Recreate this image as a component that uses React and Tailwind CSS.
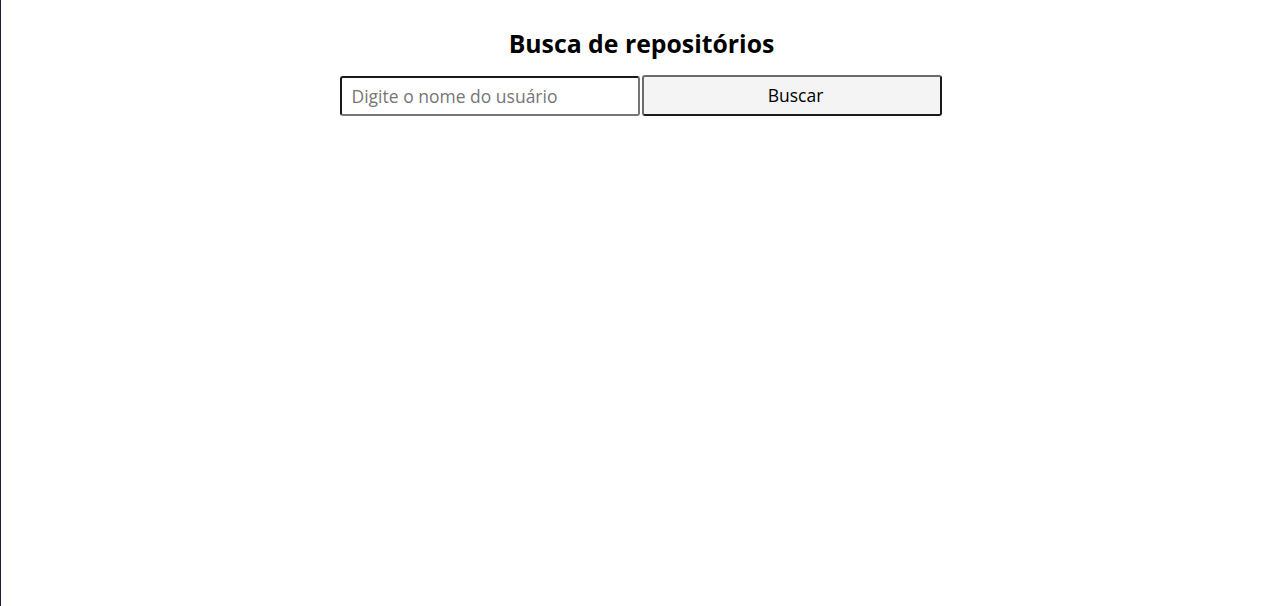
import React, { useState } from 'react';

export default function App() {
  const [user, setUser] = useState('');

  return (
    <div className="min-h-[606px] bg-white border-l border-[#1f1f33] font-['Open_Sans',sans-serif] text-black">
      <div className="flex flex-col items-center pl-[5px] pt-[27px]">
        {/* Title */}
        <h1 className="text-[24.8px] leading-[32px] font-bold pl-[2px]">Busca de repositórios</h1>

        {/* Search form */}
        <form className="flex items-end gap-[2px] mt-[16px] h-[41px]" onSubmit={(e) => e.preventDefault()}>
          <input
            value={user}
            onChange={(e) => setUser(e.target.value)}
            placeholder="Digite o nome do usuário"
            className="w-[300px] h-[40px] px-[10px] text-[17.5px] bg-white rounded-[3px] border-2 border-t-[#1a1a1a] border-l-[#1a1a1a] border-b-[#767676] border-r-[#767676] placeholder:text-[#767676] outline-none"
          />
          <button
            type="submit"
            className="w-[300px] h-[41px] pl-[8px] text-[17.5px] bg-[#f4f4f4] rounded-[3px] border-2 border-t-[#6b6b6b] border-l-[#6b6b6b] border-b-[#1a1a1a] border-r-[#1a1a1a]"
          >
            Buscar
          </button>
        </form>
      </div>
    </div>
  );
}
